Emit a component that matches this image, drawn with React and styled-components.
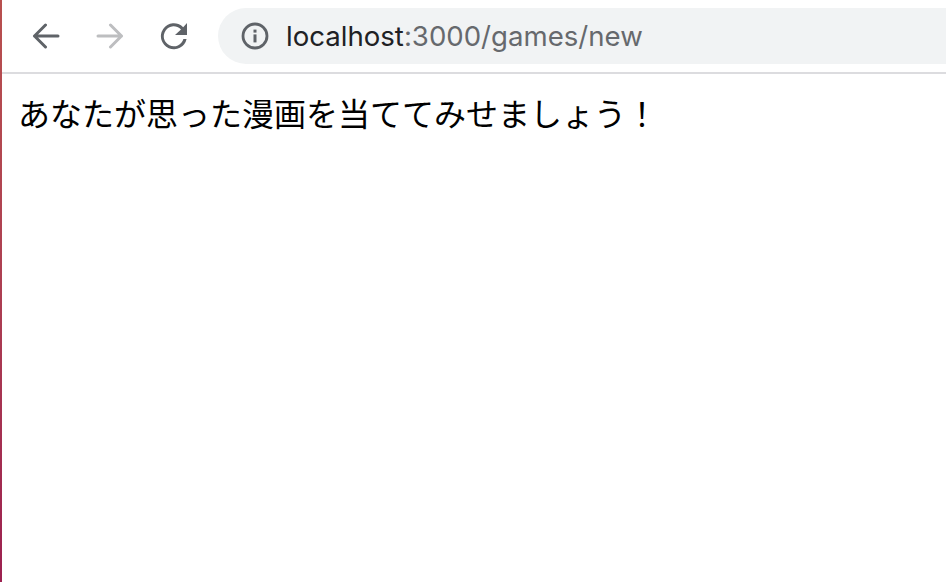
import React from "react";
import styled, { createGlobalStyle } from "styled-components";

const Global = createGlobalStyle`
  html, body { margin: 0; padding: 0; background: #fff; overflow: hidden; }
`;
const Frame = styled.div`
  width: 946px; height: 582px; display: flex; overflow: hidden; background: #fff;
`;
const Edge = styled.div`
  width: 2px; flex: none;
  background: linear-gradient(180deg, #b8504f 0%, #ad3f52 50%, #9c2150 100%);
`;
const Main = styled.div`
  flex: 1; min-width: 0; display: flex; flex-direction: column;
`;
const Toolbar = styled.div`
  height: 72px; flex: none; display: flex; align-items: center;
  box-sizing: content-box; border-bottom: 2px solid #dcdcdf; padding-left: 26px;
`;
const NavButton = styled.button`
  width: 36px; height: 36px; padding: 0; border: 0; background: none;
  display: flex; align-items: center; justify-content: center;
  margin-right: 28px; color: ${p => (p.$disabled ? "#bdbec0" : "#5f6368")};
`;
const Omnibox = styled.div`
  flex: 1; height: 56px; margin-left: -2px;
  border-radius: 28px 0 0 28px; background: #f1f3f4;
  display: flex; align-items: center; padding-left: 23px; gap: 17px;
`;
const Url = styled.div`
  font-family: Inter, Roboto, "Liberation Sans", sans-serif; font-size: 27.6px; color: #66696d;
  white-space: nowrap;
`;
const Host = styled.span` color: #202124; `;
const Content = styled.p`
  margin: 0; padding: 18px 0 0 16px;
  font-family: "Noto Sans CJK JP", sans-serif; font-size: 32px; line-height: 40px; color: #000;
`;

const Back = () => (
  <svg width="28" height="26" viewBox="0 0 28 26" fill="none" stroke="currentColor" strokeWidth="3" strokeLinecap="round" strokeLinejoin="round">
    <path d="M26 13H2.5M13.5 2 2.5 13l11 11" />
  </svg>
);
const Forward = () => (
  <svg width="28" height="26" viewBox="0 0 28 26" fill="none" stroke="currentColor" strokeWidth="3" strokeLinecap="round" strokeLinejoin="round">
    <path d="M2 13h23.5M14.5 2l11 11-11 11" />
  </svg>
);
const Reload = () => (
  <svg width="30" height="30" viewBox="0 0 30 30">
    <path d="M24.2 6.2A13 13 0 1 0 27.6 18h-3.2A10 10 0 1 1 22 8.4L16 14h12V2z" fill="currentColor" />
  </svg>
);
const Info = () => (
  <svg width="28" height="28" viewBox="0 0 28 28" fill="none">
    <circle cx="14" cy="14" r="12" stroke="#5f6368" strokeWidth="2.8" />
    <rect x="12.5" y="12.4" width="3" height="8" fill="#5f6368" />
    <rect x="12.5" y="7.6" width="3" height="3" fill="#5f6368" />
  </svg>
);

export default function App() {
  return (
    <>
      <Global />
      <Frame>
        <Edge />
        <Main>
          <Toolbar>
            <NavButton aria-label="戻る"><Back /></NavButton>
            <NavButton aria-label="進む" $disabled><Forward /></NavButton>
            <NavButton aria-label="再読み込み"><Reload /></NavButton>
            <Omnibox>
              <Info />
              <Url><Host>localhost</Host>:3000/games/new</Url>
            </Omnibox>
          </Toolbar>
          <Content>あなたが思った漫画を当ててみせましょう！</Content>
        </Main>
      </Frame>
    </>
  );
}
